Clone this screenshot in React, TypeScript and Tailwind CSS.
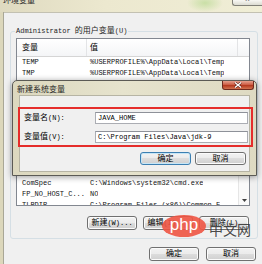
import React from 'react';

function Zh({ children }: { children: React.ReactNode }) {
  return <span className="text-[8px]">{children}</span>;
}

function WinButton({
  children,
  className = '',
  primary = false,
}: {
  children: React.ReactNode;
  className?: string;
  primary?: boolean;
}) {
  return (
    <div
      className={`flex shrink-0 items-center justify-center rounded-[3px] border bg-[linear-gradient(#f2f2f2_0%,#ebebeb_50%,#dddddd_50%,#cfcfcf_100%)] leading-none ${
        primary
          ? 'border-[#3c7fb1] shadow-[inset_0_0_0_1px_#c6e6f7]'
          : 'border-[#707070] shadow-[inset_0_0_0_1px_#fbfbfb]'
      } ${className}`}
    >
      {children}
    </div>
  );
}

function ListHeader() {
  return (
    <div className="flex h-[18px] shrink-0 border-b border-[#d5d5d5] bg-[linear-gradient(#ffffff,#f4f5f7)]">
      <div className="flex w-[70px] shrink-0 items-center border-r border-[#e3e4e6] pl-[5px]">
        <Zh>变量</Zh>
      </div>
      <div className="flex w-[151px] shrink-0 items-center border-r border-[#e3e4e6] pl-[3px]">
        <Zh>值</Zh>
      </div>
      <div className="flex-1" />
    </div>
  );
}

function Row({ name, value }: { name: string; value: string }) {
  return (
    <div className="flex h-[11px] shrink-0 whitespace-nowrap leading-[11px] text-[#111]">
      <div className="w-[70px] shrink-0 overflow-hidden pl-[5px]">{name}</div>
      <div className="overflow-hidden pl-[3px]">{value}</div>
    </div>
  );
}

const userVars = [
  { name: 'TEMP', value: '%USERPROFILE%\\AppData\\Local\\Temp' },
  { name: 'TMP', value: '%USERPROFILE%\\AppData\\Local\\Temp' },
];

const systemVars = [
  { name: 'CLASSPATH', value: '.;%JAVA_HOME%\\LIB' },
  { name: 'ComSpec', value: 'C:\\Windows\\system32\\cmd.exe' },
  { name: 'FP_NO_HOST_C...', value: 'NO' },
  { name: 'TLBDIR', value: 'C:\\Program Files (x86)\\Common F' },
];

export default function App() {
  return (
    <div className="relative h-[264px] w-[262px] overflow-hidden bg-[#f0f0f0] font-['Liberation_Mono','Noto_Sans_CJK_SC',monospace] text-[7px] text-black">
      <div className="flex h-full flex-col">
        {/* window title bar */}
        <div className="flex h-[12px] shrink-0 items-start justify-between bg-[radial-gradient(ellipse_18px_9px_at_205px_3px,#c9dfa6,transparent),linear-gradient(to_right,#dfdac0,#ece8cf_40%,#f0eed6)]">
          <span className="-mt-[4px] pl-[3px] text-[8px] leading-[10px] text-[#2a2a2a]">环境变量</span>
          <div className="flex h-[6px] w-[30px] justify-center overflow-hidden rounded-bl-[3px] border-b border-l border-[#808078] bg-[linear-gradient(#f8f8f4,#dcdcd2)]">
            <span className="-mt-[5px] text-[8px] leading-[8px] text-[#555]">x</span>
          </div>
        </div>

        <div className="flex flex-1">
          <div className="w-[4px] shrink-0 border-r border-[#a9a796] bg-[#dcd7bb]" />
          <div className="flex flex-1 flex-col border-t border-[#c3c1b2] pr-[4px] pl-[6px]">
            <fieldset className="mt-[13px] rounded-[3px] border border-[#d5dfe5] pr-[7px] pb-[8px] pl-[5px]">
              <legend className="-ml-[1px] px-[1px] leading-[10px] text-[#1e1e1e]">
                Administrator <Zh>的用户变量</Zh>(U)
              </legend>

              <div className="mt-[2px] flex h-[72px] flex-col overflow-hidden border border-[#828790] bg-white">
                <ListHeader />
                {userVars.map((v) => (
                  <Row key={v.name} name={v.name} value={v.value} />
                ))}
              </div>

              <div className="mt-[6px] mr-[1px] flex justify-end gap-[6px]">
                <WinButton className="h-[14px] w-[50px]">
                  <Zh>新建</Zh>(N)...
                </WinButton>
                <WinButton className="h-[14px] w-[50px]">
                  <Zh>编辑</Zh>(E)...
                </WinButton>
                <WinButton className="h-[14px] w-[50px]">
                  <Zh>删除</Zh>(D)
                </WinButton>
              </div>

              <div className="mt-[5px] h-[9px] leading-[9px]">
                <Zh>系统变量</Zh>(S)
              </div>

              <div className="mt-[4px] flex h-[58px] flex-col overflow-hidden border border-[#828790] bg-white">
                <ListHeader />
                <div className="flex min-h-0 flex-1">
                  <div className="flex min-w-0 flex-1 flex-col overflow-hidden">
                    {systemVars.map((v) => (
                      <Row key={v.name} name={v.name} value={v.value} />
                    ))}
                  </div>
                  <div className="flex w-[11px] shrink-0 flex-col justify-end border-l border-[#e6e6e6] bg-[#fafafa]">
                    <div className="flex h-[9px] items-center justify-center">
                      <svg width="5" height="3" viewBox="0 0 5 3">
                        <path d="M0 0 L5 0 L2.5 3 Z" fill="#404040" />
                      </svg>
                    </div>
                  </div>
                </div>
              </div>

              <div className="mt-[10px] mr-[1px] flex justify-end gap-[6px]">
                <WinButton className="h-[14px] w-[50px]">
                  <Zh>新建</Zh>(W)...
                </WinButton>
                <WinButton className="h-[14px] w-[50px]">
                  <Zh>编辑</Zh>(I)...
                </WinButton>
                <WinButton className="h-[14px] w-[50px]">
                  <Zh>删除</Zh>(L)
                </WinButton>
              </div>
            </fieldset>

            <div className="mt-[8px] mr-[2px] flex justify-end gap-[7px]">
              <WinButton className="h-[14px] w-[50px]">
                <Zh>确定</Zh>
              </WinButton>
              <WinButton className="h-[14px] w-[50px]">
                <Zh>取消</Zh>
              </WinButton>
            </div>
          </div>
        </div>
      </div>

      {/* 新建系统变量 dialog, on top of the window */}
      <div className="absolute top-[80px] left-[12px] flex h-[96px] w-[245px] flex-col rounded-t-[5px] border border-[#5b5a55] bg-[linear-gradient(to_right,#dcd8bf,#e6e3cd_45%,#dedac2)] px-[6px] pb-[3px] shadow-[0_1px_6px_rgba(0,0,0,0.4)]">
        <div className="flex h-[14px] shrink-0 items-start justify-between">
          <span className="-ml-[2px] pt-[4px] text-[8px] leading-[10px] text-[#1e1e1e]">新建系统变量</span>
          <div className="-mr-[4px] flex h-[9px] w-[32px] items-center justify-center rounded-b-[3px] border border-t-0 border-[#6e2a1e] bg-[linear-gradient(#e7a08d,#cd5f47_45%,#b5391f_55%,#d2724f)]">
            <svg width="8" height="6" viewBox="0 0 8 6">
              <path d="M1 0.5 L7 5.5 M7 0.5 L1 5.5" stroke="#5a1a10" strokeWidth="2.4" />
              <path d="M1 0.5 L7 5.5 M7 0.5 L1 5.5" stroke="#ffffff" strokeWidth="1.4" />
            </svg>
          </div>
        </div>

        <div className="flex flex-1 flex-col border border-[#b6b4a4] bg-[#f0f0f0] pt-[16px] pr-[1px] pl-[4px]">
          <div className="flex h-[12px] items-center">
            <span className="w-[71px] shrink-0">
              <Zh>变量名</Zh>(N):
            </span>
            <div className="flex h-[12px] flex-1 items-center border border-[#abadb3] border-t-[#8e9199] bg-white pl-[2px]">
              JAVA_HOME
            </div>
          </div>
          <div className="mt-[7px] flex h-[12px] items-center">
            <span className="w-[71px] shrink-0">
              <Zh>变量值</Zh>(V):
            </span>
            <div className="flex h-[12px] flex-1 items-center border border-[#abadb3] border-t-[#8e9199] bg-white pl-[2px]">
              {'C:\\Program Files\\Java\\jdk-9'}
            </div>
          </div>
          <div className="mt-[9px] mr-[2px] flex justify-end gap-[4px]">
            <WinButton primary className="h-[13px] w-[51px]">
              <Zh>确定</Zh>
            </WinButton>
            <WinButton className="h-[13px] w-[51px]">
              <Zh>取消</Zh>
            </WinButton>
          </div>
        </div>

        {/* red annotation frame */}
        <div className="absolute top-[26px] left-[5px] h-[40px] w-[235px] border-2 border-[#e52d2b]" />
      </div>

      {/* watermark */}
      <div className="absolute top-[215px] left-[162px] flex h-[22px] w-[44px] items-center justify-center rounded-[50%] bg-[#ee5443]/90">
        <span className="-mt-[3px] font-['Liberation_Sans',sans-serif] text-[17px] leading-[17px] text-white">php</span>
      </div>
      <span className="absolute top-[220px] left-[209px] font-['Noto_Sans_CJK_SC',sans-serif] text-[14px] leading-[18px] text-[#333]/90">
        中文网
      </span>
    </div>
  );
}
